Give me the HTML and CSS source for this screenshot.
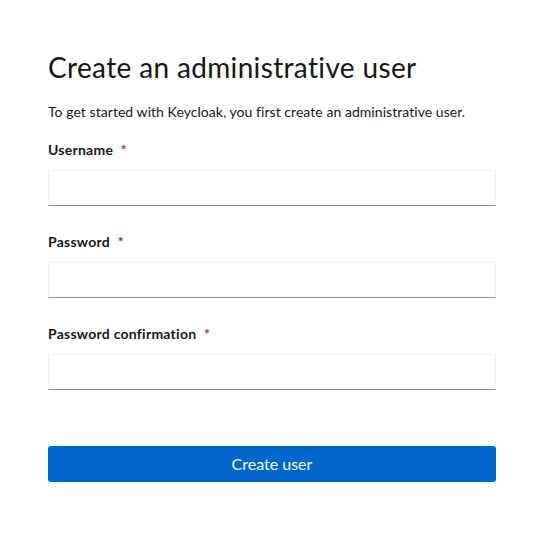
FILE: index.html
```html
<!DOCTYPE html>
<html lang="en">
<head>
<meta charset="utf-8">
<title>Create an administrative user</title>
<link rel="stylesheet" href="styles.css">
</head>
<body>
<main class="page">
  <h1 class="title">Create an administrative user</h1>
  <p class="intro">To get started with Keycloak, you first create an administrative user.</p>
  <form class="form">
    <div class="group">
      <label class="label" for="username">Username <span class="req">*</span></label>
      <input class="input" id="username" type="text">
    </div>
    <div class="group">
      <label class="label" for="password">Password <span class="req">*</span></label>
      <input class="input" id="password" type="password">
    </div>
    <div class="group">
      <label class="label" for="confirm">Password confirmation <span class="req">*</span></label>
      <input class="input" id="confirm" type="password">
    </div>
    <div class="actions">
      <button class="button" type="button">Create user</button>
    </div>
  </form>
</main>
</body>
</html>
```
FILE: styles.css
```css
* { box-sizing: border-box; }
html, body { margin: 0; padding: 0; background: #fff; }
body {
  font-family: "Lato", "Liberation Sans", sans-serif;
  color: #151515;
}
.page {
  padding: 49px 47px 0 48px;
}
.title {
  margin: 0;
  font-size: 28px;
  font-weight: 400;
  line-height: 36px;
  letter-spacing: 0.35px;
}
.intro {
  margin: 16px 0 0;
  font-size: 14px;
  line-height: 21px;
  letter-spacing: 0.05px;
}
.form {
  display: flex;
  flex-direction: column;
  gap: 24px;
  margin-top: 16px;
}
.group {
  display: flex;
  flex-direction: column;
}
.label {
  font-size: 14px;
  font-weight: 700;
  line-height: 24px;
  padding-bottom: 8px;
  letter-spacing: 0.25px;
}
.req {
  color: #c9190b;
  margin-left: 4px;
}
.input {
  height: 36px;
  width: 100%;
  border: 1px solid #f0f0f0;
  border-bottom-color: #8a8d90;
  background: #fff;
  font: inherit;
  padding: 6px 8px;
}
.actions {
  margin-top: 32px;
}
.button {
  width: 100%;
  height: 36px;
  border: 0;
  border-radius: 3px;
  background: #0066cc;
  color: #fff;
  font-family: inherit;
  font-size: 16px;
  line-height: 22px;
}
```
